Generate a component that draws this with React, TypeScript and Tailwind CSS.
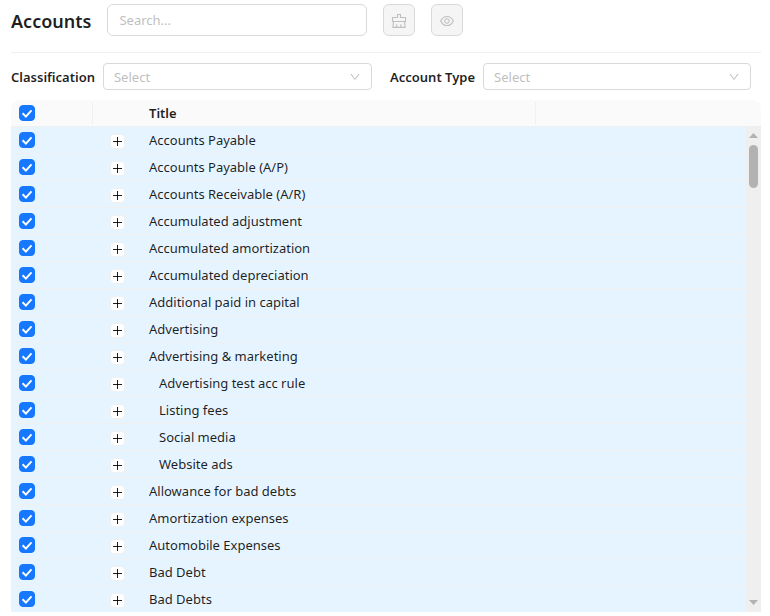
import { useState } from "react";
import { AiOutlineDown, AiOutlineEye } from "react-icons/ai";

type Account = {
  title: string;
  level?: number;
};

const accounts: Account[] = [
  { title: "Accounts Payable" },
  { title: "Accounts Payable (A/P)" },
  { title: "Accounts Receivable (A/R)" },
  { title: "Accumulated adjustment" },
  { title: "Accumulated amortization" },
  { title: "Accumulated depreciation" },
  { title: "Additional paid in capital" },
  { title: "Advertising" },
  { title: "Advertising & marketing" },
  { title: "Advertising test acc rule", level: 1 },
  { title: "Listing fees", level: 1 },
  { title: "Social media", level: 1 },
  { title: "Website ads", level: 1 },
  { title: "Allowance for bad debts" },
  { title: "Amortization expenses" },
  { title: "Automobile Expenses" },
  { title: "Bad Debt" },
  { title: "Bad Debts" },
];

export default function App() {
  const [selected, setSelected] = useState<string[]>(
    accounts.map((a) => a.title)
  );
  const allSelected = selected.length === accounts.length;

  const toggle = (title: string) =>
    setSelected((prev) =>
      prev.includes(title) ? prev.filter((t) => t !== title) : [...prev, title]
    );

  return (
    <main className="bg-white pt-1 pr-[9px] pb-1 pl-[11px] font-['Noto_Sans','Open_Sans',sans-serif] text-[13px] leading-5 text-black/88">
      <header className="flex items-center gap-4 border-b border-[#f0f0f0] pb-4">
        <h1 className="pt-px text-lg font-semibold">Accounts</h1>
        <input
          type="text"
          aria-label="Search accounts"
          placeholder="Search..."
          className="h-8 w-[260px] rounded-md border border-[#d9d9d9] px-[11px] outline-none placeholder:text-[#bfbfbf]"
        />
        <IconButton label="Clear filters">
          <BrushIcon />
        </IconButton>
        <IconButton label="Show">
          <AiOutlineEye className="size-4" />
        </IconButton>
      </header>

      <div className="flex gap-[18px] pt-[10px] pr-[10px] pb-[10px]">
        <SelectField id="classification" label="Classification" />
        <SelectField id="account-type" label="Account Type" />
      </div>

      <div className="flex overflow-hidden rounded-t-lg">
        <table className="min-w-0 flex-1 table-fixed border-separate border-spacing-0 text-left">
          <colgroup>
            <col className="w-[82px]" />
            <col className="w-12" />
            <col className="w-[395px]" />
            <col />
          </colgroup>
          <thead className="bg-[#fafafa]">
            <tr className="h-[27px]">
              <th className="border-b border-[#f0f0f0] p-0">
                <div className="flex h-[22px] items-center border-r border-[#f0f0f0] pl-2">
                  <Checkbox
                    label="Select all"
                    checked={allSelected}
                    onChange={() =>
                      setSelected(
                        allSelected ? [] : accounts.map((a) => a.title)
                      )
                    }
                  />
                </div>
              </th>
              <th className="border-b border-[#f0f0f0] p-0" />
              <th className="border-b border-[#f0f0f0] p-0 font-semibold">
                <div className="flex h-[22px] items-center border-r border-[#f0f0f0] pl-2">
                  Title
                </div>
              </th>
              <th className="border-b border-[#f0f0f0] p-0" />
            </tr>
          </thead>
          <tbody>
            {accounts.map((account) => (
              <Row
                key={account.title}
                account={account}
                checked={selected.includes(account.title)}
                onToggle={() => toggle(account.title)}
              />
            ))}
          </tbody>
        </table>
        <Scrollbar />
      </div>
    </main>
  );
}

function Row({
  account,
  checked,
  onToggle,
}: {
  account: Account;
  checked: boolean;
  onToggle: () => void;
}) {
  return (
    <tr
      className={
        checked
          ? "group h-[27px] bg-[#e6f4ff] last:h-[26px]"
          : "group h-[27px] bg-white last:h-[26px]"
      }
    >
      <td className="border-b border-[#f0f0f0] p-0 pl-2 group-last:border-b-0">
        <Checkbox
          label={`Select ${account.title}`}
          checked={checked}
          onChange={onToggle}
        />
      </td>
      <td className="border-b border-[#f0f0f0] p-0 group-last:border-b-0">
        <button
          type="button"
          aria-label={`Expand ${account.title}`}
          className="mx-auto mt-[2px] flex size-[15px] items-center justify-center rounded border border-[#f0f0f0] bg-white"
        >
          <svg
            viewBox="0 0 9 9"
            className="size-[9px] shrink-0"
            stroke="currentColor"
          >
            <path d="M4.5 0v9M0 4.5h9" />
          </svg>
        </button>
      </td>
      <td
        className={
          account.level
            ? "border-b border-[#f0f0f0] p-0 pl-[18px] group-last:border-b-0"
            : "border-b border-[#f0f0f0] p-0 pl-2 group-last:border-b-0"
        }
      >
        {account.title}
      </td>
      <td className="border-b border-[#f0f0f0] p-0 group-last:border-b-0" />
    </tr>
  );
}

function Checkbox({
  label,
  checked,
  onChange,
}: {
  label: string;
  checked: boolean;
  onChange: () => void;
}) {
  return (
    <span className="relative block size-4">
      <input
        type="checkbox"
        aria-label={label}
        checked={checked}
        onChange={onChange}
        className="block size-4 appearance-none rounded border border-[#d9d9d9] bg-white checked:border-[#1677ff] checked:bg-[#1677ff]"
      />
      {checked && (
        <svg
          viewBox="0 0 16 16"
          fill="none"
          stroke="white"
          strokeWidth="2"
          className="pointer-events-none absolute inset-0 size-4"
        >
          <path d="M3.6 8.3l3.3 3.3 5.6-6.2" />
        </svg>
      )}
    </span>
  );
}

function SelectField({ id, label }: { id: string; label: string }) {
  return (
    <div className="flex min-w-0 flex-1 items-center gap-2">
      <label htmlFor={id} className="font-semibold whitespace-nowrap">
        {label}
      </label>
      <div className="relative min-w-0 flex-1">
        <select
          id={id}
          defaultValue=""
          className="block h-[27px] w-full appearance-none rounded border border-[#d9d9d9] bg-white px-[10px] text-[#bfbfbf] outline-none"
        >
          <option value="">Select</option>
        </select>
        <AiOutlineDown className="pointer-events-none absolute top-2 right-[11px] size-3 text-[#bfbfbf]" />
      </div>
    </div>
  );
}

function IconButton({
  label,
  children,
}: {
  label: string;
  children: React.ReactNode;
}) {
  return (
    <button
      type="button"
      disabled
      aria-label={label}
      className="flex size-8 items-center justify-center rounded-md border border-[#d9d9d9] bg-[#f5f5f5] pt-px text-[#bfbfbf]"
    >
      {children}
    </button>
  );
}

function BrushIcon() {
  return (
    <svg
      viewBox="0 0 16 16"
      fill="none"
      stroke="currentColor"
      strokeWidth="1.1"
      className="size-4"
    >
      <path d="M6.5 4.5v-3h3v3h5v4h-13v-4z" />
      <path d="M2.5 8.5l-.6 5.9h12.2l-.6-5.9M5.7 14.4v-3.2M9.8 14.4v-3.2" />
    </svg>
  );
}

function Scrollbar() {
  return (
    <div className="flex w-[15px] flex-col bg-[#fafafa] pt-[26px]">
      <div className="flex flex-1 flex-col items-center bg-[#efefef] pt-[7px] pb-[7px]">
        <svg viewBox="0 0 9 5" className="h-[5px] w-[9px]" fill="#b2b2b2">
          <path d="M4.5 0L9 5H0z" />
        </svg>
        <div className="mt-[7px] h-[43px] w-[9px] rounded-full bg-[#b2b2b2]" />
        <svg
          viewBox="0 0 9 5"
          className="mt-auto h-[5px] w-[9px]"
          fill="#b2b2b2"
        >
          <path d="M0 0h9L4.5 5z" />
        </svg>
      </div>
    </div>
  );
}
